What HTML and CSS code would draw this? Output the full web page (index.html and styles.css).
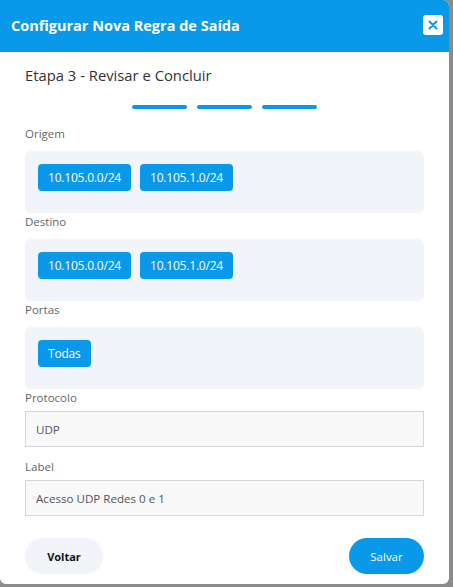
FILE: index.html
```html
<!DOCTYPE html>
<html lang="pt-BR">
<head>
  <meta charset="UTF-8">
  <title>Configurar Nova Regra de Saída</title>
  <meta name="viewport" content="width=device-width, initial-scale=1.0">
  <link rel="stylesheet" href="styles.css">
</head>
<body>
  <div class="modal">
    <div class="modal-header">
      <h2>Configurar Nova Regra de Saída</h2>
      <button class="close" aria-label="Fechar">
        <svg width="10" height="10" viewBox="0 0 10 10"><path d="M1.5 1.5l7 7M8.5 1.5l-7 7" stroke="#0a98e8" stroke-width="2" stroke-linecap="round"/></svg>
      </button>
    </div>

    <div class="modal-body">
      <h3 class="step-title">Etapa 3 - Revisar e Concluir</h3>

      <div class="steps">
        <span></span><span></span><span></span>
      </div>

      <label>Origem</label>
      <div class="tag-box">
        <span class="tag">10.105.0.0/24</span>
        <span class="tag">10.105.1.0/24</span>
      </div>

      <label>Destino</label>
      <div class="tag-box">
        <span class="tag">10.105.0.0/24</span>
        <span class="tag">10.105.1.0/24</span>
      </div>

      <label>Portas</label>
      <div class="tag-box">
        <span class="tag">Todas</span>
      </div>

      <label class="field-label">Protocolo</label>
      <input type="text" value="UDP" readonly>

      <label class="field-label">Label</label>
      <input type="text" value="Acesso UDP Redes 0 e 1" readonly>

      <div class="actions">
        <button class="btn btn-back">Voltar</button>
        <button class="btn btn-save">Salvar</button>
      </div>
    </div>
  </div>
</body>
</html>
```

FILE: styles.css
```css
body {
  font-family: "Open Sans", "Noto Sans", Arial, sans-serif;
  background: #8b8b8b;
  margin: 0;
}
.modal {
  width: 449px;
  height: 584px;
  background: #fff;
  border-radius: 0 6px 6px 6px;
  overflow: hidden;
}
.modal-header {
  display: flex;
  align-items: center;
  justify-content: space-between;
  height: 52px;
  padding: 0 6px 0 11px;
  background: #0a98e8;
}
.modal-header h2 {
  margin: 0 0 2px;
  font-size: 14.5px;
  font-weight: 700;
  color: #fff;
}
.close {
  display: flex;
  align-items: center;
  justify-content: center;
  width: 20px;
  height: 20px;
  padding: 0;
  margin-bottom: 2px;
  background: #fff;
  border: none;
  border-radius: 3px;
  cursor: pointer;
}
.modal-body {
  padding: 0 25px;
  display: flex;
  flex-direction: column;
}
.step-title {
  margin: 13px 0 0;
  font-size: 14.8px;
  line-height: 20px;
  font-weight: 400;
  color: #333;
}
.steps {
  display: flex;
  justify-content: center;
  gap: 10px;
  margin: 20px 0 16px;
}
.steps span {
  width: 55px;
  height: 4px;
  border-radius: 2px;
  background: #0a98e8;
}
label {
  font-size: 11.5px;
  line-height: 18px;
  color: #666;
  margin-bottom: 8px;
}
.field-label {
  margin-bottom: 4px;
}
.tag-box {
  display: flex;
  gap: 9px;
  height: 62px;
  box-sizing: border-box;
  padding: 13px 13px 0;
  background: #f1f4f8;
  border-radius: 6px;
  align-items: flex-start;
}
.tag {
  height: 27px;
  line-height: 27px;
  padding: 0 10px;
  font-size: 12px;
  letter-spacing: -0.2px;
  color: #fff;
  background: #0a98e8;
  border-radius: 4px;
}
input {
  height: 36px;
  box-sizing: border-box;
  margin: 0 0 11px;
  padding: 0 10px;
  font-family: inherit;
  font-size: 11.6px;
  color: #555;
  background: #f9f9f9;
  border: 1px solid #d3d6da;
  border-radius: 0;
  outline: none;
}
.actions {
  display: flex;
  justify-content: space-between;
  margin-top: 11px;
}
.btn {
  height: 36px;
  border: none;
  border-radius: 18px;
  font-family: inherit;
  font-size: 11px;
  cursor: pointer;
}
.btn-back {
  width: 78px;
  background: #f1f4f8;
  color: #111;
  font-weight: 700;
}
.btn-save {
  width: 75px;
  background: #0a98e8;
  color: #fff;
  font-weight: 400;
  font-size: 11.5px;
}
```
